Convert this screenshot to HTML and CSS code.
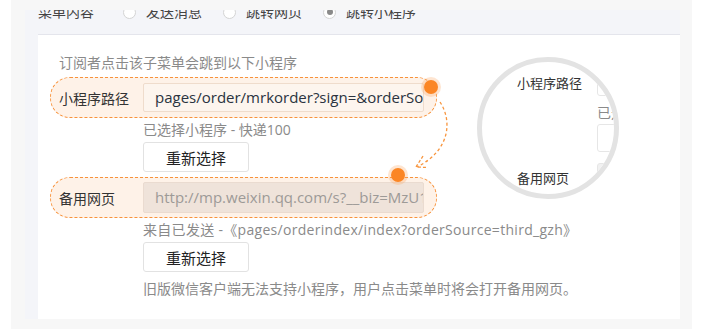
FILE: index.html
```html
<!DOCTYPE html>
<html lang="zh-CN">
<head>
<meta charset="utf-8">
<link rel="stylesheet" href="styles.css">
</head>
<body>
<div class="frame">
  <div class="panel">
    <div class="menu-row">
      <span class="menu-title">菜单内容</span>
      <label class="radio"><span class="dot"></span>发送消息</label>
      <label class="radio"><span class="dot"></span>跳转网页</label>
      <label class="radio"><span class="dot checked"></span>跳转小程序</label>
    </div>
    <div class="card">
      <p class="intro">订阅者点击该子菜单会跳到以下小程序</p>

      <div class="pill">
        <span class="pill-label">小程序路径</span>
        <div class="field">pages/order/mrkorder?sign=&amp;orderSource=third_gzh</div>
        <span class="marker m1"></span>
      </div>
      <div class="sub">
        <p class="hint">已选择小程序 - 快递100</p>
        <button class="btn">重新选择</button>
      </div>

      <div class="pill pill2">
        <span class="pill-label">备用网页</span>
        <div class="field disabled">http://mp.weixin.qq.com/s?__biz=MzU1NjY2ODQ0Mg==</div>
        <span class="marker m2"></span>
      </div>
      <div class="sub">
        <p class="hint wide">来自已发送 -《pages/orderindex/index?orderSource=third_gzh》</p>
        <button class="btn">重新选择</button>
        <p class="note">旧版微信客户端无法支持小程序，用户点击菜单时将会打开备用网页。</p>
      </div>

      <svg class="arrow" width="60" height="90" viewBox="0 0 60 90">
        <path d="M25 5 C 37 23, 36 53, 2 70" fill="none" stroke="#f8943c" stroke-width="1.3" stroke-dasharray="3 2.5"/>
        <path d="M8 59 L1 70 L12 70.5" fill="none" stroke="#f8943c" stroke-width="1.3" stroke-dasharray="3 2"/>
      </svg>

      <div class="lens">
        <div class="mini-row first">
          <span class="mini-label">小程序路径</span>
          <span class="mini-box"></span>
        </div>
        <p class="mini-hint">已选择小程序</p>
        <span class="mini-box mini-btn"></span>
        <div class="mini-row second">
          <span class="mini-label">备用网页</span>
          <span class="mini-box gray"></span>
        </div>
      </div>
    </div>
  </div>
</div>
</body>
</html>
```

FILE: styles.css
```css
* { box-sizing: border-box; }
html, body { margin: 0; padding: 0; }
body {
  background: #ffffff;
  font-family: "Open Sans", "Noto Sans CJK SC", sans-serif;
  font-size: 14px;
  color: #333;
  width: 704px;
  height: 330px;
  overflow: hidden;
}
.frame {
  margin-left: 11px;
  width: 681px;
  height: 329px;
  background: #f7f7f7;
  padding: 10px 0 0 14px;
}
.panel {
  width: 655px;
  height: 309px;
  background: #f4f5f9;
  overflow: hidden;
  display: flex;
  flex-direction: column;
}
.menu-row {
  margin-top: -10px;
  height: 24px;
  display: flex;
  align-items: center;
  padding-left: 13px;
  line-height: 24px;
  color: #444;
}
.menu-title { margin-right: 29px; }
.radio {
  display: flex;
  align-items: center;
  gap: 10px;
  margin-right: 21px;
}
.dot {
  width: 13px;
  height: 13px;
  border-radius: 50%;
  border: 1px solid #d4d4d4;
  background: #fff;
  position: relative;
}
.dot.checked::after {
  content: "";
  position: absolute;
  left: 2.5px;
  top: 2.5px;
  width: 6px;
  height: 6px;
  border-radius: 50%;
  background: #8a8a8a;
}
.card {
  position: relative;
  margin-top: 10px;
  margin-left: 13px;
  flex: 1;
  background: #fff;
  border-top: 1px solid #e4e5ec;
  padding: 18px 0 0 12px;
}
p { margin: 0; }
.intro {
  padding-left: 9px;
  line-height: 20px;
  color: #8a8a8a;
  margin-bottom: 4px;
}
.pill {
  position: relative;
  width: 387px;
  height: 41px;
  border: 1.4px dashed #f8923a;
  border-radius: 20px;
  background: #fef2e8;
  display: flex;
  align-items: center;
  padding-left: 8px;
}
.pill2 { margin-top: 5px; }
.pill-label {
  width: 84px;
  color: #333;
  font-size: 14px;
}
.field {
  width: 281px;
  height: 29px;
  border: 1px solid #efdccc;
  background: #fdf5ee;
  border-radius: 2px;
  padding-left: 11px;
  line-height: 27px;
  font-size: 15px;
  color: #2a3340;
  white-space: nowrap;
  overflow: hidden;
}
.field.disabled {
  background: #efe3da;
  border-color: #eadbd0;
  color: #9d9a97;
  height: 31px;
  line-height: 29px;
}
.marker {
  position: absolute;
  width: 14px;
  height: 14px;
  border-radius: 50%;
  background: #fb8625;
  box-shadow: 0 0 0 3px rgba(251, 160, 90, 0.28);
}
.m1 { left: 373px; top: 2px; }
.m2 { left: 340px; top: -10px; }
.sub {
  padding-left: 93px;
  padding-top: 2px;
}
.hint {
  line-height: 20px;
  color: #8a8a8a;
  white-space: nowrap;
}
.hint.wide { letter-spacing: 0.3px; }
.btn {
  display: block;
  margin-top: 2px;
  width: 106px;
  height: 30px;
  border: 1px solid #e2e2e2;
  border-radius: 3px;
  background: #fff;
  font-family: "Open Sans", "Noto Sans CJK SC", sans-serif;
  font-size: 15px;
  color: #222;
  padding: 0;
}
.note {
  margin-top: 7px;
  line-height: 20px;
  color: #8a8a8a;
}
.arrow {
  position: absolute;
  left: 377px;
  top: 62px;
}
.lens {
  position: absolute;
  left: 439px;
  top: 22px;
  width: 142px;
  height: 142px;
  border-radius: 50%;
  border: 5px solid #e3e3e3;
  background: #fff;
  overflow: hidden;
  padding-left: 35px;
  padding-top: 6px;
}
.mini-row {
  display: flex;
  align-items: center;
  height: 28px;
}
.mini-row.second { margin-top: 11px; }
.mini-label {
  width: 80px;
  flex: none;
  font-size: 13px;
  color: #333;
}
.mini-box {
  display: block;
  width: 60px;
  height: 28px;
  flex: none;
  border: 1px solid #e6e6e6;
  border-radius: 3px;
}
.mini-box.gray { background: #f1f1f1; }
.mini-hint {
  margin: 7px 0 0 80px;
  line-height: 20px;
  white-space: nowrap;
  color: #8a8a8a;
}
.mini-btn {
  margin: 1px 0 0 80px;
}
```
